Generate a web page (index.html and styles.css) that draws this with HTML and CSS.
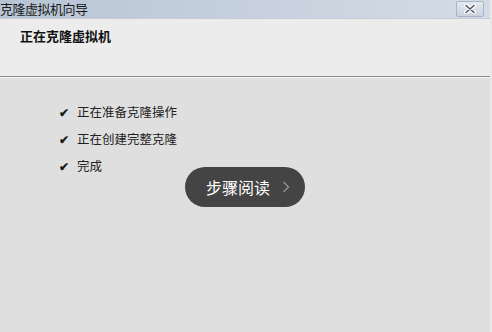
FILE: index.html
```html
<!DOCTYPE html>
<html lang="zh-CN">
<head>
  <meta charset="UTF-8">
  <title>克隆虚拟机向导</title>
  <link rel="stylesheet" href="styles.css">
</head>
<body>
  <div class="window">
    <div class="titlebar">
      <span class="title">克隆虚拟机向导</span>
      <div class="close">
        <svg width="14" height="10" viewBox="0 0 14 10"><path d="M3 1.5 L11 8.5 M11 1.5 L3 8.5" stroke="#fff" stroke-width="4" stroke-linecap="round"/><path d="M3 1.5 L11 8.5 M11 1.5 L3 8.5" stroke="#4e5864" stroke-width="1.6" stroke-linecap="round"/></svg>
      </div>
    </div>

    <div class="header">
      <h2>正在克隆虚拟机</h2>
    </div>

    <div class="content">
      <ul class="steps">
        <li><span class="check">✔</span>正在准备克隆操作</li>
        <li><span class="check">✔</span>正在创建完整克隆</li>
        <li><span class="check">✔</span>完成</li>
      </ul>
      <div class="read-btn">
        步骤阅读
        <svg width="8" height="12" viewBox="0 0 8 12"><path d="M1.5 1 L6.5 6 L1.5 11" fill="none" stroke="#9a9a9a" stroke-width="1.2"/></svg>
      </div>
    </div>
  </div>
</body>
</html>
```

FILE: styles.css
```css
body {
  margin: 0;
  padding: 0;
  font-family: "Noto Sans CJK SC", "Liberation Sans", sans-serif;
  background: #dfdfdf;
}
.window {
  width: 492px;
  height: 332px;
  display: flex;
  flex-direction: column;
  background: #dfdfdf;
  box-sizing: border-box;
  border-right: 2px solid #e8e8e8;
}
.titlebar {
  height: 18px;
  display: flex;
  align-items: center;
  justify-content: space-between;
  background: linear-gradient(to right, #b7c4d4, #c9d3df 60%, #d3dce6);
  border-bottom: 1px solid #c4ccd6;
}
.title {
  font-size: 13px;
  color: #1a1a1a;
  line-height: 18px;
  letter-spacing: -0.5px;
}
.close {
  width: 26px;
  height: 14px;
  margin-right: 6px;
  border: 1px solid #a9b4c2;
  border-radius: 2px;
  background: linear-gradient(to bottom, #e4e9f0, #c9d2dd);
  display: flex;
  align-items: center;
  justify-content: center;
}
.header {
  height: 57px;
  background: #ececec;
  border-bottom: 1px solid #8a8a8a;
  box-shadow: 0 1px 0 #f4f4f4;
  padding-left: 20px;
}
.header h2 {
  margin: 0;
  padding-top: 7px;
  font-size: 13px;
  font-weight: bold;
  color: #111;
}
.content {
  flex: 1;
  padding-top: 21px;
  position: relative;
}
.steps {
  list-style: none;
  margin: 0;
  padding: 0 0 0 59px;
}
.steps li {
  font-size: 12.5px;
  color: #222;
  height: 27px;
  line-height: 27px;
}
.check {
  display: inline-block;
  width: 18px;
  font-size: 12px;
  font-weight: bold;
  color: #1a1a1a;
}
.read-btn {
  position: absolute;
  left: 185px;
  top: 90px;
  width: 120px;
  height: 40px;
  border-radius: 20px;
  background: #444444;
  color: #fff;
  font-size: 16px;
  display: flex;
  align-items: center;
  justify-content: center;
  gap: 12px;
  box-sizing: border-box;
  padding-left: 6px;
}
```
